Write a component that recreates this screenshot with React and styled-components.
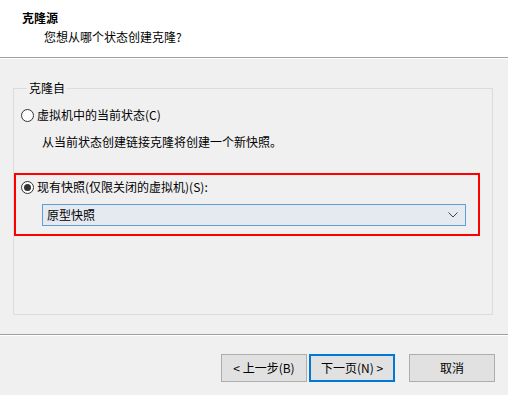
import React from "react";
import styled, { createGlobalStyle } from "styled-components";

const Global = createGlobalStyle`
  html, body { margin: 0; padding: 0; }
  body {
    background: #f0f0f0;
    font-family: "Noto Sans CJK SC", "Liberation Sans", sans-serif;
    font-size: 12px;
    color: #000;
  }
`;

const Window = styled.div`
  width: 508px;
  height: 395px;
  display: flex;
  flex-direction: column;
  background: #f0f0f0;
  overflow: hidden;
`;

const Header = styled.div`
  height: 58px;
  box-sizing: border-box;
  background: #fff;
  padding: 10px 0 0 22px;
  border-bottom: 1px solid #a0a0a0;
  box-shadow: 0 1px 0 #fff;
`;

const Title = styled.div`
  font-weight: bold;
  line-height: 16px;
`;

const Subtitle = styled.div`
  line-height: 16px;
  margin-top: 3px;
  padding-left: 22px;
`;

const Body = styled.div`
  flex: 1;
  padding: 22px 15px 0 13px;
`;

const Group = styled.fieldset`
  margin: 0;
  min-width: 0;
  height: 235px;
  box-sizing: border-box;
  border: 1px solid #dcdcdc;
  padding: 11px 12px 0 7px;
`;

const Legend = styled.legend`
  margin-left: 6px;
  padding: 0 2px;
  line-height: 16px;
`;

const RadioRow = styled.label`
  display: flex;
  align-items: center;
  gap: 3px;
  line-height: 16px;
  height: 16px;
`;

const RadioDot = styled.span`
  width: 13px;
  height: 13px;
  box-sizing: border-box;
  border-radius: 50%;
  border: 1px solid #333;
  background: #fff;
  display: flex;
  align-items: center;
  justify-content: center;
  flex-shrink: 0;
  &::after {
    content: "";
    width: 7px;
    height: 7px;
    border-radius: 50%;
    background: #333;
    display: ${(p) => (p.checked ? "block" : "none")};
  }
`;

const Hint = styled.div`
  line-height: 16px;
  margin-top: 11px;
  padding-left: 21px;
`;

const Highlight = styled.div`
  margin: 23px 0 0 -7px;
  border: 2px solid #ff0000;
  padding: 4px 12px 8px 5px;
  height: 63px;
  box-sizing: border-box;
`;

const Combo = styled.div`
  margin: 9px 0 0 21px;
  height: 22px;
  box-sizing: border-box;
  border: 1px solid #5f9ed6;
  background: #e5e9f0;
  display: flex;
  align-items: center;
  justify-content: space-between;
  padding: 0 7px 0 4px;
  line-height: 16px;
`;

const Footer = styled.div`
  height: 61px;
  box-sizing: border-box;
  border-top: 1px solid #a0a0a0;
  box-shadow: inset 0 1px 0 #fff;
  display: flex;
  justify-content: flex-end;
  align-items: flex-start;
  padding: 19px 13px 0 0;
`;

const Button = styled.button`
  width: 86px;
  height: 28px;
  box-sizing: border-box;
  margin-left: ${(p) => p.gap || 0}px;
  background: #e1e1e1;
  border: ${(p) => (p.primary ? "2px solid #0078d7" : "1px solid #adadad")};
  font-family: "Noto Sans CJK SC", "Liberation Sans", sans-serif;
  font-size: 12px;
  color: #000;
  padding: 0;
  line-height: 16px;
`;

function Radio({ checked, children }) {
  return (
    <RadioRow>
      <RadioDot checked={checked} />
      <span>{children}</span>
    </RadioRow>
  );
}

export default function App() {
  return (
    <>
      <Global />
      <Window>
        <Header>
          <Title>克隆源</Title>
          <Subtitle>您想从哪个状态创建克隆?</Subtitle>
        </Header>
        <Body>
          <Group>
            <Legend>克隆自</Legend>
            <Radio>虚拟机中的当前状态(C)</Radio>
            <Hint>从当前状态创建链接克隆将创建一个新快照。</Hint>
            <Highlight>
              <Radio checked>现有快照(仅限关闭的虚拟机)(S):</Radio>
              <Combo>
                <span>原型快照</span>
                <svg width="10" height="6" viewBox="0 0 10 6">
                  <path d="M0.5 0.5 L5 5 L9.5 0.5" fill="none" stroke="#444" strokeWidth="1" />
                </svg>
              </Combo>
            </Highlight>
          </Group>
        </Body>
        <Footer>
          <Button>&lt; 上一步(B)</Button>
          <Button primary gap={2}>下一页(N) &gt;</Button>
          <Button gap={14}>取消</Button>
        </Footer>
      </Window>
    </>
  );
}
